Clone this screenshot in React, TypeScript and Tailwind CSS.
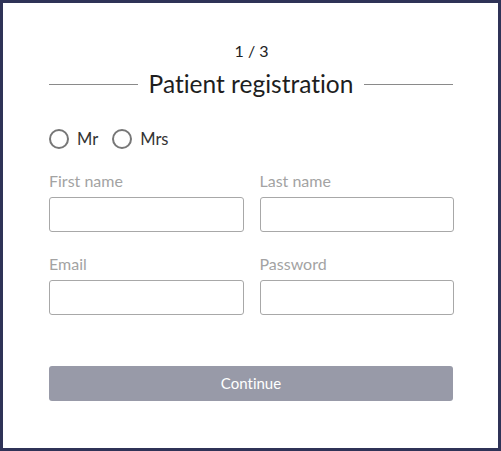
import React from "react";

export default function App() {
  return (
    <div className="w-[501px] h-[451px] bg-white border-[3px] border-[#2f3357] box-border [font-variant-ligatures:none]" style={{ fontFamily: "Lato, 'Noto Sans', sans-serif" }}>
      <div className="pl-[46px] pr-[44px] pt-[38px]">
        <div className="text-center text-[16px] leading-[20px] text-[#222]">1 / 3</div>
        <div className="flex items-center gap-[11px] mt-[9px] mr-[1px]">
          <div className="flex-1 h-px bg-[#8a8a8a]" />
          <div className="text-[24.5px] leading-[28px] text-[#1e1e1e]">Patient registration</div>
          <div className="flex-1 h-px bg-[#8a8a8a]" />
        </div>
        <div className="flex items-center mt-[29px] h-[24px] text-[16.5px] text-[#333]">
          <label className="flex items-center">
            <span className="w-[20px] h-[20px] rounded-full border-[2px] border-[#777] box-border" />
            <span className="ml-[8px]">Mr</span>
          </label>
          <label className="flex items-center ml-[14px]">
            <span className="w-[20px] h-[20px] rounded-full border-[2px] border-[#777] box-border" />
            <span className="ml-[8px]">Mrs</span>
          </label>
        </div>
        <div className="grid grid-cols-2 gap-x-[16px] mt-[20px]">
          <div>
            <div className="text-[16px] leading-[20px] text-[#a3a3a3]">First name</div>
            <div className="mt-[6px] h-[35px] border border-[#a8a8a8] rounded-[3px]" />
          </div>
          <div>
            <div className="text-[16px] leading-[20px] text-[#a3a3a3]">Last name</div>
            <div className="mt-[6px] h-[35px] border border-[#a8a8a8] rounded-[3px]" />
          </div>
          <div className="mt-[22px]">
            <div className="text-[16px] leading-[20px] text-[#a3a3a3]">Email</div>
            <div className="mt-[6px] h-[35px] border border-[#a8a8a8] rounded-[3px]" />
          </div>
          <div className="mt-[22px]">
            <div className="text-[16px] leading-[20px] text-[#a3a3a3]">Password</div>
            <div className="mt-[6px] h-[35px] border border-[#a8a8a8] rounded-[3px]" />
          </div>
        </div>
        <div className="mt-[51px] mr-[1px]">
          <button className="w-full h-[35px] bg-[#989aa8] rounded-[3px] text-white text-[15px] block">Continue</button>
        </div>
      </div>
    </div>
  );
}
